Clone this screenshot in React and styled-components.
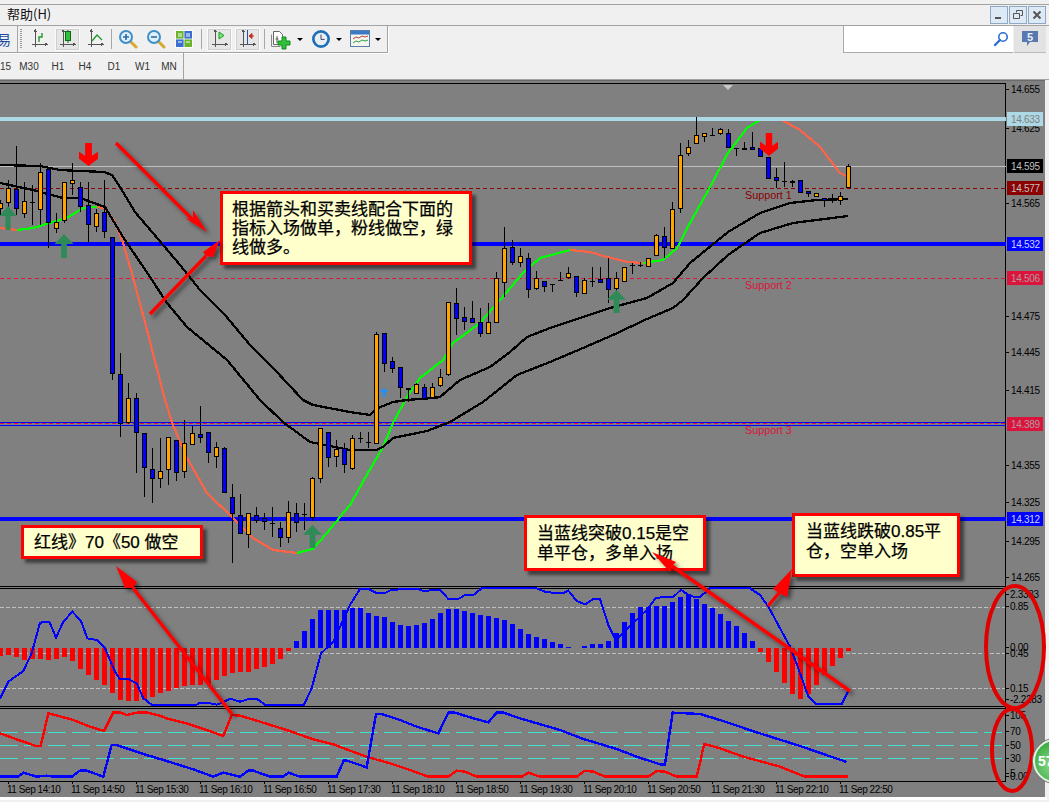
import React from 'react';
import styled, { createGlobalStyle } from 'styled-components';

const Global = createGlobalStyle`
  html, body { margin: 0; padding: 0; background: #f0f0f0; overflow: hidden; }
  #root { width: 1049px; height: 802px; }
`;

const UI_FONT = `"Liberation Sans", "Noto Sans CJK SC", sans-serif`;

const Shell = styled.div`
  position: relative;
  width: 1049px;
  height: 802px;
  overflow: hidden;
  background: #f0f0f0;
  display: flex;
  flex-direction: column;
  font-family: ${UI_FONT};
`;
const MenuBar = styled.div`
  margin-top: 4px;
  height: 20px;
  border-top: 1px solid #a3a3a3;
  border-bottom: 1px solid #a3a3a3;
  display: flex;
  align-items: center;
  padding: 0 3px 0 7px;
`;
const MenuLabel = styled.span`
  font-size: 13px;
  line-height: 14px;
  margin-top: -3px;
  color: #111;
  font-family: "Noto Sans CJK SC", sans-serif;
`;
const WindowControls = styled.div`
  margin-left: auto;
  display: flex;
  gap: 1px;
`;
const WindowButton = styled.button`
  width: 18px;
  height: 18px;
  padding: 0;
  border: 1px solid #8fa8c4;
  background: #dde9f5;
  display: flex;
  align-items: center;
  justify-content: center;
`;
const ToolRow = styled.div`
  height: 27px;
  display: flex;
  align-items: stretch;
`;
const ToolStrip = styled.div`
  width: 388px;
  box-sizing: border-box;
  border-right: 1px solid #a3a3a3;
  border-bottom: 1px solid #a3a3a3;
  box-shadow: 1px 1px 0 #fff;
  display: flex;
  align-items: center;
  overflow: hidden;
`;
const ClippedGlyph = styled.span`
  width: 24px;
  margin-left: -3px;
  font-size: 14px;
  color: #1c4aa0;
  font-family: "Noto Sans CJK SC", sans-serif;
  white-space: nowrap;
  box-sizing: border-box;
`;
const Separator = styled.div`
  width: 1px;
  height: ${p => p.$h || 22}px;
  background: #a8a8a8;
  margin: 0 ${p => p.$m ?? 2}px;
  flex: none;
`;
const Grip = styled.div`
  width: 2px;
  height: 20px;
  margin: 0 3px 0 2px;
  background: repeating-linear-gradient(to bottom, #9a9a9a 0 1px, transparent 1px 2px);
  flex: none;
`;
const ToolButton = styled.div`
  width: ${p => p.$w || 28}px;
  height: 23px;
  flex: none;
  display: flex;
  align-items: center;
  justify-content: center;
  box-sizing: border-box;
  ${p => p.$pressed && `
    width: 25px;
    margin: 0 1.5px;
    background: #e6e6e6;
    border: 1px solid #fafafa;
    outline: 1px solid #cfcfcf;
    outline-offset: -2px;
  `}
`;
const Caret = styled.span`
  width: 0;
  height: 0;
  flex: none;
  border-left: 3px solid transparent;
  border-right: 3px solid transparent;
  border-top: 3px solid #000;
  margin: 0 ${p => p.$r ?? 6}px 0 3px;
`;
const SearchBox = styled.div`
  margin-left: auto;
  width: 170px;
  box-sizing: border-box;
  background: #fff;
  border-left: 1px solid #aaa;
  border-bottom: 1px solid #aaa;
  display: flex;
  align-items: center;
  justify-content: flex-end;
  padding-right: 4px;
`;
const NoticeButton = styled.div`
  width: 32px;
  margin: 0 3px 0 1px;
  background: #e3e3e3;
  border-bottom: 1px solid #bbb;
  display: flex;
  align-items: center;
  justify-content: center;
`;
const TimeframeRow = styled.div`
  height: 26px;
  border-bottom: 1px solid #a3a3a3;
  display: flex;
`;
const TimeframeStrip = styled.div`
  width: 184px;
  box-sizing: border-box;
  border-right: 1px solid #a3a3a3;
  display: grid;
  grid-template-columns: 11px 36px 22px 32px 26px 31px 22px;
  align-items: center;
  justify-items: center;
  font-size: 10px;
  color: #333;
`;
const ChartWindow = styled.div`
  width: 1045px;
  height: 717px;
  background: #808080;
  border-top: 1px solid #6a6a6a;
  box-sizing: border-box;
  display: flex;
  flex-direction: column;
  flex: none;
`;
const PaneSvg = styled.svg`
  display: block;
  flex: none;
`;
const TimeAxis = styled.div`
  height: 17px;
  padding-left: 7px;
  display: grid;
  grid-template-columns: repeat(14, 64px);
  align-items: center;
`;
const TimeLabel = styled.span`
  position: relative;
  font-size: 10px;
  letter-spacing: -0.45px;
  color: #000;
  white-space: nowrap;
  &::before {
    content: '';
    position: absolute;
    left: 1px;
    top: -3px;
    width: 1px;
    height: 3px;
    background: #000;
  }
`;
const BottomEdge = styled.div`
  height: 3px;
  background: #fff;
  width: 1047px;
`;
const AxisText = styled.text`
  font-family: "Liberation Sans", sans-serif;
  font-size: 10px;
  letter-spacing: -0.3px;
  fill: ${p => p.$fill || '#000'};
`;
const ChartNote = styled.text`
  font-family: "Liberation Sans", sans-serif;
  font-size: 10.8px;
  fill: ${p => p.$fill};
`;
const Callout = styled.div`
  position: absolute;
  left: ${p => p.$x}px;
  top: ${p => p.$y}px;
  width: ${p => p.$w}px;
  height: ${p => p.$h}px;
  box-sizing: border-box;
  background: #ffffcc;
  border: 3px solid #f00;
  box-shadow: 4px 4px 3px rgba(0, 0, 0, 0.5);
  padding: ${p => p.$pad};
  font-family: "Liberation Sans", "Noto Sans CJK SC", sans-serif;
  font-size: 17px;
  line-height: ${p => p.$lh || 19}px;
  color: #000;
  -webkit-text-stroke: 0.25px #000;
  white-space: pre;
`;
const Overlay = styled.svg`
  position: absolute;
  left: 0;
  top: 0;
  pointer-events: none;
`;
const Badge = styled.div`
  position: absolute;
  left: 1033px;
  top: 739px;
  width: 44px;
  height: 44px;
  box-sizing: border-box;
  border-radius: 50%;
  border: 2px solid #e6f0e4;
  box-shadow: 0 0 0 1px #707870;
  background: radial-gradient(circle at 45% 60%, #8fdc8f, #34a83c 75%);
  color: #fff;
  font-size: 14px;
  font-weight: 700;
  padding: 12px 0 0 3px;
`;

/* ---------- data ---------- */
const candles = [
  [0,200,215,203,208,'o'],[8,180,215,188,202,'o'],[16,146,215,189,208,'b'],[24,182,218,201,213,'o'],[32,185,225,202,203,'d'],
  [40,163,225,172,209,'o'],[48,167,248,169,222,'b'],[56,213,233,222,228,'o'],[64,182,223,182,220,'o'],[72,163,195,180,183,'o'],
  [80,182,212,187,206,'b'],[88,182,243,205,224,'b'],[96,209,232,213,226,'o'],[104,180,238,212,231,'b'],[112,237,380,237,373,'b'],
  [120,353,437,374,423,'b'],[128,383,424,398,422,'o'],[136,393,473,398,432,'b'],[144,433,497,433,467,'b'],[152,448,503,469,478,'b'],
  [160,438,488,471,478,'o'],[168,437,485,437,469,'o'],[176,440,481,440,472,'b'],[184,420,478,443,471,'o'],[192,426,444,433,444,'o'],
  [200,406,443,434,437,'b'],[208,432,463,432,452,'b'],[216,442,468,447,456,'o'],[224,447,492,448,492,'b'],[232,484,563,497,513,'b'],
  [240,494,534,515,533,'b'],[248,513,548,513,534,'o'],[256,507,523,515,520,'b'],[264,513,530,518,521,'b'],[272,507,537,523,523,'d'],
  [280,522,547,528,537,'b'],[288,501,543,512,537,'o'],[296,503,532,513,522,'b'],[304,503,530,514,514,'d'],[312,477,521,478,517,'o'],
  [320,428,483,428,478,'o'],[328,432,467,432,457,'b'],[336,440,467,449,456,'o'],[344,443,473,448,464,'b'],[352,435,470,438,468,'o'],
  [360,432,443,438,438,'d'],[368,432,448,442,442,'d'],[376,332,444,334,443,'o'],[384,333,372,333,363,'b'],[392,357,373,361,368,'b'],
  [400,367,398,367,387,'b'],[408,388,402,388,389,'b'],[416,383,394,384,393,'o'],[424,384,398,387,398,'b'],[432,383,397,387,397,'o'],
  [440,369,387,377,385,'o'],[448,302,376,302,374,'o'],[456,288,335,303,318,'b'],[464,307,330,317,321,'b'],[472,301,323,318,322,'b'],
  [480,308,337,322,333,'b'],[488,303,333,322,333,'o'],[496,272,322,278,322,'o'],[504,227,297,248,282,'o'],[512,240,265,247,262,'b'],
  [520,248,267,256,262,'o'],[528,253,298,258,289,'b'],[536,271,290,278,288,'o'],[544,281,292,281,286,'b'],[552,284,292,284,284,'d'],
  [560,272,280,280,280,'d'],[568,267,279,273,277,'o'],[576,276,297,276,292,'b'],[584,278,293,280,293,'o'],[592,267,287,281,281,'d'],
  [600,267,282,279,282,'b'],[608,258,303,278,289,'b'],[616,272,292,278,288,'o'],[624,267,281,267,281,'o'],[632,263,274,265,265,'d'],
  [640,262,267,265,265,'d'],[648,258,266,258,266,'o'],[656,234,255,235,255,'o'],[664,227,258,236,247,'b'],[672,202,248,209,248,'o'],
  [680,143,213,155,208,'o'],[688,140,156,147,153,'o'],[696,117,143,135,143,'o'],[704,133,142,133,136,'o'],[712,128,135,135,135,'d'],
  [720,128,135,129,133,'o'],[728,129,147,133,147,'b'],[736,148,156,148,148,'d'],[744,142,149,148,149,'o'],[752,132,149,147,149,'b'],
  [760,142,156,148,156,'b'],[768,157,178,157,178,'b'],[776,168,188,177,180,'b'],[784,162,187,181,181,'d'],[792,180,187,181,182,'b'],
  [800,180,192,180,192,'b'],[808,191,197,191,193,'b'],[816,193,197,193,196,'o'],[824,198,207,198,200,'b'],[832,194,203,198,198,'d'],
  [840,192,205,196,200,'o'],[848,164,187,166,187,'o'],
];
const upperMA = [[0,165],[40,166],[60,170],[80,171],[104,172],[112,175],[120,187],[135,212],[158,239],[180,265],[200,290],[225,315],[250,345],[275,370],[303,400],[313,405],[350,412],[370,415],[378,408],[393,402],[407,400],[433,398],[440,397],[460,380],[490,367],[510,352],[527,337],[550,328],[577,319],[610,308],[647,298],[673,283],[690,263],[728,232],[760,213],[790,203],[817,200],[848,199]];
const lowerMA = [[0,183],[33,190],[63,198],[80,198],[105,207],[123,237],[150,277],[167,303],[187,327],[227,360],[260,400],[283,422],[310,442],[350,450],[376,450],[383,447],[393,438],[427,431],[450,422],[483,402],[517,375],[550,362],[583,348],[613,335],[647,319],[673,308],[683,300],[703,278],[728,255],[760,233],[793,223],[848,216]];
const signalSegments = [
  ['#ff6347',[[0,228],[17,230]]],
  ['#00ff00',[[17,230],[33,228],[50,223],[67,218],[83,208],[97,207]]],
  ['#ff6347',[[97,207],[105,208],[115,222],[123,243],[133,277],[147,330],[165,400],[173,425],[187,458],[207,493],[233,518],[253,538],[273,550],[297,553]]],
  ['#00ff00',[[297,553],[313,549],[327,533],[340,517],[350,505],[365,478],[383,447],[393,423],[407,397],[420,378],[443,360],[453,343],[480,323],[500,300],[523,273],[540,258],[570,250]]],
  ['#ff6347',[[570,250],[590,252],[607,257],[627,262],[643,263]]],
  ['#00ff00',[[643,263],[663,260],[677,248],[690,223],[710,187],[728,153],[747,128],[760,120]]],
  ['#ff6347',[[782,120],[800,130],[820,147],[840,173],[846,176]]],
];
const hLines = [
  { y: 166, color: '#c0c0c0', w: 1 },
  { y: 188, color: '#8b0000', w: 1, dash: '4 3' },
  { y: 244, color: '#0000ff', w: 4 },
  { y: 278, color: '#dc143c', w: 1, dash: '4 3' },
  { y: 422, color: '#0000ff', w: 1 },
  { y: 425, color: '#0000ff', w: 1 },
  { y: 423.5, color: '#dc143c', w: 1, dash: '4 3' },
  { y: 519, color: '#0000ff', w: 4 },
];
const priceLabels = [
  [14.655, 89],[14.625, 128],[14.565, 203],[14.475, 316],[14.445, 352],[14.415, 390],[14.355, 465],[14.325, 502],[14.295, 541],[14.265, 577],
];
const priceTags = [
  { v: '14.633', y: 119, bg: '#add8e6', fg: '#808080' },
  { v: '14.595', y: 166, bg: '#000', fg: '#c0c0c0' },
  { v: '14.577', y: 188, bg: '#8b0000', fg: '#c0c0c0' },
  { v: '14.532', y: 244, bg: '#0000ff', fg: '#c8d4ff' },
  { v: '14.506', y: 278, bg: '#dc143c', fg: '#b09aa0' },
  { v: '14.389', y: 424, bg: '#dc143c', fg: '#b09aa0' },
  { v: '14.312', y: 519, bg: '#0000ff', fg: '#c8d4ff' },
];
const histA = [213,210,215,225,222,222,224,222,217,228,251,270,285,300,323,345,347,347,345,335,323,317,308,303,300,300,298,285,272,265,262,260,252,245,237,222,197,168,138,102,75,75,75,75,68,68,83,93,96,110,120,123,120,114,102,84,72,72,78,84,90,92,98,105,117,132,147,156,162,171,177,187,189,184,177,176,168,145,111,84,65,65,64,64,51,36,28,41].map(Y => 585 + Y / 3);
const histB = [312,323,342,363,378,398,422,455,485,515,548,583,598,583,555,525,497,473,453].map(Y => 500 + Y / 3);
const hist = [...histA, ...histB];
const ZERO = 648;

const z7 = a => a.map(([X, Y]) => [X / 3, 585 + Y / 3]);
const z8 = a => a.map(([X, Y]) => [350 + X / 3, 585 + Y / 3]);
const z9 = a => a.map(([X, Y]) => [700 + X / 3, 500 + Y / 3]);

const macdLine = [
  ...z7([[0,340],[25,290],[70,258],[95,205],[120,113],[148,110],[168,158],[190,110],[217,80],[243,108],[262,160],[290,165],[315,190],[345,260],[360,282],[385,282],[410,295],[430,340],[455,359],[590,359],[600,353],[620,353],[650,359],[665,354],[690,341],[720,350],[750,341],[770,341],[795,359],[912,359],[935,310],[963,205],[1000,170],[1050,60]]),
  ...z8([[30,12],[55,12],[80,24],[105,24],[125,14],[205,12],[220,18],[270,14],[295,42],[325,42],[345,30],[370,30],[395,10],[560,10],[590,22],[640,24],[655,17],[680,48],[705,58],[730,42],[750,42],[775,120],[795,160],[805,158],[890,75],[918,38],[970,36],[993,14],[1020,34],[1050,36]]),
  ...z9([[30,265],[150,265],[180,285],[205,320],[270,440],[295,505],[325,590],[350,613],[425,613],[445,572]]),
];
const rsiRed = [
  ...z7([[0,445],[50,463],[108,483],[122,483],[145,385],[165,390],[220,405],[270,425],[312,438],[340,382],[360,382],[380,390],[415,382],[440,382],[480,392],[500,400],[560,415],[620,435],[670,453],[695,390],[720,392],[780,410],[860,435],[940,463],[1000,478],[1050,497]]),
  ...z8([[50,515],[120,535],[180,555],[235,575],[295,575],[320,557],[345,560],[380,575],[515,575],[535,563],[570,575],[680,575],[705,557],[730,560],[765,575],[895,575],[920,558],[945,560],[980,575],[1040,575]]),
  ...z9([[0,790],[12,733],[25,735],[60,745],[130,770],[240,800],[315,830],[445,830]]),
];
const rsiBlue = [
  ...z7([[0,575],[55,575],[70,563],[110,575],[140,572],[160,575],[215,575],[240,557],[260,557],[310,575],[335,480],[350,480],[440,510],[490,525],[580,553],[640,575],[670,563],[720,575],[745,557],[760,557],[810,575],[850,575],[865,563],[900,575],[1010,575],[1032,525],[1050,530]]),
  ...z8([[50,547],[78,387],[95,387],[150,405],[200,425],[265,445],[295,383],[315,383],[370,400],[415,412],[440,383],[460,383],[510,400],[630,435],[700,462],[800,492],[860,515],[930,538],[945,538],[968,383],[1050,387]]),
  ...z9([[60,660],[170,697],[300,738],[440,786]]),
];
const pts = a => a.map(p => p.join(',')).join(' ');
const times = ['14:10','14:50','15:30','16:10','16:50','17:30','18:10','18:50','19:30','20:10','20:50','21:30','22:10','22:50'];

/* ---------- chart pieces ---------- */
const Candle = ({ c: [x, wt, wb, bt, bb, k] }) => (
  <g shapeRendering="crispEdges">
    <line x1={x + 0.5} x2={x + 0.5} y1={wt} y2={wb} stroke="#000" />
    {k === 'd'
      ? <line x1={x - 2} x2={x + 3} y1={bt + 0.5} y2={bt + 0.5} stroke="#000" />
      : <rect x={x - 1.5} y={bt + 0.5} width={4} height={Math.max(bb - bt, 1)} fill={k === 'o' ? '#ffa500' : '#0000ff'} stroke="#000" />}
  </g>
);
const UpArrow = ({ x, y, w, h, color }) => {
  const s = w * 0.3, sh = h * 0.42;
  return <polygon fill={color} points={`${x},${y} ${x + w / 2},${y + sh} ${x + s / 2},${y + sh} ${x + s / 2},${y + h} ${x - s / 2},${y + h} ${x - s / 2},${y + sh} ${x - w / 2},${y + sh}`} />;
};
const DownArrow = ({ x, y, w, h, color }) => {
  const s = w * 0.36, d = h * 0.55;
  return <polygon fill={color} points={`${x - s / 2},${y} ${x + s / 2},${y} ${x + s / 2},${y + d} ${x + w / 2},${y + d - 4} ${x + w / 2},${y + d + 3} ${x},${y + h} ${x - w / 2},${y + d + 3} ${x - w / 2},${y + d - 4} ${x - s / 2},${y + d}`} />;
};
const AxisFrame = ({ top, bottom }) => (
  <line x1="1005.5" x2="1005.5" y1={top} y2={bottom} stroke="#000" shapeRendering="crispEdges" />
);
const Tick = ({ y }) => <line x1="1006" x2="1009" y1={Math.round(y) + 0.5} y2={Math.round(y) + 0.5} stroke="#000" shapeRendering="crispEdges" />;

const MainPane = () => (
  <PaneSvg width="1045" height="506" viewBox="0 81 1045 506">
    <line x1="0" x2="1006" y1="83.5" y2="83.5" stroke="#000" shapeRendering="crispEdges" />
    <AxisFrame top={83} bottom={587} />
    {hLines.map((l, i) => (
      <line key={i} x1="0" x2="1006" y1={l.y} y2={l.y} stroke={l.color} strokeWidth={l.w} strokeDasharray={l.dash} shapeRendering="crispEdges" />
    ))}
    <polygon points="723,85 733,85 728,90" fill="#c8c8c8" />
    <ChartNote x="745" y="199" $fill="#8b0000">Support 1</ChartNote>
    <ChartNote x="745" y="289" $fill="#dc143c">Support 2</ChartNote>
    <ChartNote x="745" y="434" $fill="#dc143c">Support 3</ChartNote>
    {signalSegments.map(([c, s], i) => (
      <polyline key={i} points={pts(s)} fill="none" stroke={c} strokeWidth="2.2" shapeRendering="crispEdges" />
    ))}
    <polyline points={pts(upperMA)} fill="none" stroke="#000" strokeWidth="2.3" shapeRendering="crispEdges" />
    <polyline points={pts(lowerMA)} fill="none" stroke="#000" strokeWidth="2.3" shapeRendering="crispEdges" />
    <line x1="0" x2="1006" y1="119" y2="119" stroke="#add8e6" strokeWidth="4" shapeRendering="crispEdges" />
    {candles.map(c => <Candle key={c[0]} c={c} />)}
    <UpArrow x={8} y={206} w={17} h={24} color="#2e8b57" />
    <UpArrow x={64} y={234} w={19} h={24} color="#2e8b57" />
    <UpArrow x={312.5} y={525} w={19} h={23} color="#2e8b57" />
    <UpArrow x={616.5} y={290} w={19} h={23} color="#2e8b57" />
    <UpArrow x={384} y={388} w={9} h={9} color="#1e90ff" />
    <DownArrow x={88.5} y={143} w={19} h={23} color="#ff0000" />
    <DownArrow x={769} y={133} w={18} h={23} color="#ff0000" />
    {priceLabels.map(([v, y]) => (
      <g key={v}>
        <Tick y={y} />
        <AxisText x="1011" y={y + 3.5}>{v.toFixed(3)}</AxisText>
      </g>
    ))}
    {priceTags.map(t => (
      <g key={t.v}>
        <rect x="1007" y={t.y - 7} width="36" height="14" fill={t.bg} />
        <AxisText x="1011" y={t.y + 3.5} $fill={t.fg}>{t.v}</AxisText>
      </g>
    ))}
    <line x1="0" x2="1006" y1="586.5" y2="586.5" stroke="#000" shapeRendering="crispEdges" />
  </PaneSvg>
);

const OscillatorPane = () => (
  <PaneSvg width="1045" height="120" viewBox="0 587 1045 120">
    <line x1="0" x2="1006" y1="588.5" y2="588.5" stroke="#000" shapeRendering="crispEdges" />
    <AxisFrame top={587} bottom={707} />
    {[607, 653, 688].map(y => (
      <line key={y} x1="0" x2="1005" y1={y + 0.5} y2={y + 0.5} stroke="#c0c0c0" strokeDasharray="4 2" shapeRendering="crispEdges" />
    ))}
    {hist.map((y, i) => {
      const up = y < ZERO;
      const x = i * 8 - 2;
      return <rect key={i} x={x} y={up ? y : ZERO} width="5" height={Math.abs(y - ZERO)} fill={up ? '#0000ff' : '#ff0000'} shapeRendering="crispEdges" />;
    })}
    <polyline points={pts(macdLine)} fill="none" stroke="#0000ff" strokeWidth="2" shapeRendering="crispEdges" />
    {[['2.3383',594],['0.85',606],['0.00',647],['0.45',653],['0.15',688],['-2.2283',699]].map(([v, y]) => (
      <g key={v}>
        <Tick y={y} />
        <AxisText x="1010" y={y + 3.5}>{v}</AxisText>
      </g>
    ))}
    <line x1="0" x2="1006" y1="706.5" y2="706.5" stroke="#000" shapeRendering="crispEdges" />
  </PaneSvg>
);

const RsiPane = () => (
  <PaneSvg width="1045" height="75" viewBox="0 707 1045 75">
    <line x1="0" x2="1006" y1="708.5" y2="708.5" stroke="#000" shapeRendering="crispEdges" />
    <AxisFrame top={707} bottom={782} />
    {[732, 745, 758].map(y => (
      <line key={y} x1="0" x2="1005" y1={y + 0.5} y2={y + 0.5} stroke="#40e0d0" strokeDasharray="18 6" shapeRendering="crispEdges" />
    ))}
    <polyline points={pts(rsiRed)} fill="none" stroke="#ff0000" strokeWidth="2.4" shapeRendering="crispEdges" />
    <polyline points={pts(rsiBlue)} fill="none" stroke="#0000ff" strokeWidth="2.4" shapeRendering="crispEdges" />
    {[['105',715],['70',731],['50',745],['30',758],['5',773],['0.00',776]].map(([v, y]) => (
      <g key={v}>
        <Tick y={y} />
        <AxisText x="1010" y={y + 3.5}>{v}</AxisText>
      </g>
    ))}
    <line x1="0" x2="1006" y1="781.5" y2="781.5" stroke="#000" shapeRendering="crispEdges" />
  </PaneSvg>
);

/* ---------- annotations ---------- */
const RedArrow = ({ from, tip, w1, w2, neck }) => (
  <g>
    <line x1={from[0]} y1={from[1]} x2={neck[0]} y2={neck[1]} stroke="#f00" strokeWidth="3.4" />
    <polygon points={`${tip[0]},${tip[1]} ${w1[0]},${w1[1]} ${neck[0]},${neck[1]} ${w2[0]},${w2[1]}`} fill="#f00" />
  </g>
);
const Annotations = () => (
  <Overlay width="1049" height="802" viewBox="0 0 1049 802">
    <defs>
      <filter id="sh" x="-20%" y="-20%" width="150%" height="150%">
        <feDropShadow dx="3" dy="3" stdDeviation="2" floodColor="#000" floodOpacity="0.5" />
      </filter>
    </defs>
    <g filter="url(#sh)">
      <RedArrow from={[116, 143]} tip={[207, 232]} w1={[185, 218]} w2={[193, 210]} neck={[193, 220]} />
      <RedArrow from={[150, 314]} tip={[220, 240]} w1={[203, 252]} w2={[213, 257]} neck={[206, 256]} />
      <RedArrow from={[232, 714]} tip={[116, 566]} w1={[137, 582]} w2={[125, 588]} neck={[133, 588]} />
      <RedArrow from={[850, 691]} tip={[652, 552]} w1={[676, 562]} w2={[670, 572]} neck={[672, 566]} />
      <RedArrow from={[768, 606]} tip={[792, 569]} w1={[773, 589]} w2={[787, 597]} neck={[779, 593]} />
    </g>
    <ellipse cx="1015" cy="647" rx="29" ry="61" fill="none" stroke="#e00000" strokeWidth="4" />
    <ellipse cx="1012" cy="750" rx="20" ry="41" fill="none" stroke="#e00000" strokeWidth="4" />
  </Overlay>
);

/* ---------- toolbar icons ---------- */
const Axes = ({ children }) => (
  <svg width="22" height="22" viewBox="0 0 22 22">
    <g stroke="#555" strokeWidth="1" fill="none" shapeRendering="crispEdges">
      <path d="M7.5 2V19M4 16.5H19M6 4l1.5-2L9 4M17 15l2 1.5-2 1.5" />
    </g>
    {children}
  </svg>
);
const Magnifier = ({ plus }) => (
  <svg width="20" height="20" viewBox="0 0 20 20">
    <line x1="12" y1="12" x2="18" y2="18" stroke="#d9a830" strokeWidth="3" strokeLinecap="round" />
    <circle cx="8" cy="8" r="6" fill="#dff0fb" stroke="#3f8fc8" strokeWidth="2" />
    <path d={plus ? 'M5 8h6M8 5v6' : 'M5 8h6'} stroke="#2a6aa8" strokeWidth="1.6" />
  </svg>
);
const TileIcon = () => (
  <svg width="18" height="18" viewBox="0 0 18 18">
    <rect x="1" y="1" width="8" height="8" fill="#6ab42e" />
    <rect x="9" y="1" width="8" height="8" fill="#3a6fd0" />
    <rect x="1" y="9" width="8" height="8" fill="#3a6fd0" />
    <rect x="9" y="9" width="8" height="8" fill="#6ab42e" />
    <path d="M3 4h4M11 4h4M3 12h4M11 12h4M3 6h4M11 6h4" stroke="#fff" />
    <path d="M0.5 0.5h17v17h-17zM0.5 9h17M9 0.5v17" stroke="#fff" fill="none" strokeWidth="0.8" />
  </svg>
);
const NewChartIcon = () => (
  <svg width="22" height="22" viewBox="0 0 22 22">
    <path d="M3.5 3.5h6l3 3v10h-9z" fill="#fff" stroke="#666" />
    <path d="M1.5 6.5v12h9" fill="none" stroke="#888" />
    <path d="M7 8v7M5.5 11h3" stroke="#555" />
    <path d="M12 9h4v4h4v4h-4v4h-4v-4H8v-4h4z" fill="#2fc13a" stroke="#158a20" />
  </svg>
);
const ClockIcon = () => (
  <svg width="18" height="18" viewBox="0 0 20 20">
    <circle cx="10" cy="10" r="8.5" fill="#e8eef2" stroke="#1f6fb8" strokeWidth="3" />
    <path d="M10 5v5.5H14" stroke="#335" fill="none" />
  </svg>
);
const TemplateIcon = () => (
  <svg width="20" height="18" viewBox="0 0 20 18">
    <rect x="0.5" y="0.5" width="19" height="16" fill="#f6f6f0" stroke="#5a7da8" />
    <rect x="1" y="1" width="18" height="3.5" fill="#3a78c8" />
    <path d="M3 9l3-2 3 1 3-2 3 1 3-1" stroke="#c04030" fill="none" />
    <path d="M3 13l3-2 3 1 3-2 3 1 3-1" stroke="#30a040" fill="none" />
  </svg>
);

export default function App() {
  return (
    <Shell>
      <Global />
      <MenuBar>
        <MenuLabel>帮助(H)</MenuLabel>
        <WindowControls>
          <WindowButton aria-label="min"><svg width="10" height="10"><rect x="1" y="7" width="6" height="2" fill="#555" /></svg></WindowButton>
          <WindowButton aria-label="restore"><svg width="10" height="10" fill="none" stroke="#555"><path d="M3.5 2.5V.5h6v5h-2M.5 3.5h6v5h-6z" /></svg></WindowButton>
          <WindowButton aria-label="close"><svg width="10" height="10" stroke="#555" strokeWidth="2"><path d="M1.5 1.5l7 7M8.5 1.5l-7 7" /></svg></WindowButton>
        </WindowControls>
      </MenuBar>
      <ToolRow>
        <ToolStrip>
          <ClippedGlyph>易</ClippedGlyph>
          <Separator $m={0} $h={26} />
          <Grip />
          <ToolButton>
            <Axes><path d="M11 14V9h3V5" stroke="#1e9a2a" strokeWidth="1.4" fill="none" /></Axes>
          </ToolButton>
          <ToolButton $pressed>
            <Axes><rect x="9.5" y="3.5" width="5" height="9" fill="#2fc13a" stroke="#0a6a14" /><path d="M12 1v2.5M12 12.5V15" stroke="#0a6a14" /></Axes>
          </ToolButton>
          <ToolButton>
            <Axes><path d="M8 13l5-6 5 5" stroke="#1e9a2a" strokeWidth="1.3" fill="none" /></Axes>
          </ToolButton>
          <Separator $h={20} />
          <ToolButton><Magnifier plus /></ToolButton>
          <ToolButton><Magnifier /></ToolButton>
          <ToolButton><TileIcon /></ToolButton>
          <Separator $h={20} $m={3} />
          <ToolButton $pressed>
            <Axes><path d="M11 4v7l5-3.5z" fill="#7fe07f" stroke="#16a020" /></Axes>
          </ToolButton>
          <ToolButton $pressed>
            <Axes><path d="M11.5 2v14" stroke="#2050b0" /><path d="M18 8l-5 0M13 8l3-2.5v5z" fill="#c03020" stroke="#c03020" /></Axes>
          </ToolButton>
          <Separator $h={20} $m={3} />
          <ToolButton $w={26}><NewChartIcon /></ToolButton>
          <Caret $r={6} />
          <ToolButton $w={24}><ClockIcon /></ToolButton>
          <Caret $r={6} />
          <ToolButton $w={24}><TemplateIcon /></ToolButton>
          <Caret />
        </ToolStrip>
        <SearchBox>
          <svg width="16" height="16" viewBox="0 0 16 16" fill="none" stroke="#2a6fd0">
            <circle cx="10" cy="6" r="4.2" strokeWidth="1.6" />
            <line x1="7" y1="9" x2="2" y2="14" strokeWidth="2.4" strokeLinecap="round" />
          </svg>
        </SearchBox>
        <NoticeButton>
          <svg width="18" height="18" viewBox="0 0 18 18">
            <path d="M1 1h16v11H9l-3 4v-4H1z" fill="#5a78b0" />
            <text x="9" y="10.5" textAnchor="middle" fontFamily="Liberation Sans, sans-serif" fontSize="11" fontWeight="700" fill="#e8eef8">5</text>
          </svg>
        </NoticeButton>
      </ToolRow>
      <TimeframeRow>
        <TimeframeStrip>
          {['15', 'M30', 'H1', 'H4', 'D1', 'W1', 'MN'].map(t => <span key={t}>{t}</span>)}
        </TimeframeStrip>
      </TimeframeRow>
      <ChartWindow>
        <MainPane />
        <OscillatorPane />
        <RsiPane />
        <TimeAxis>
          {times.map(t => <TimeLabel key={t}>11 Sep {t}</TimeLabel>)}
        </TimeAxis>
      </ChartWindow>
      <BottomEdge />

      <Callout $x={220} $y={191} $w={252} $h={74} $pad="6px 6px 0 9px">{'根据箭头和买卖线配合下面的\n指标入场做单，粉线做空，绿\n线做多。'}</Callout>
      <Callout $x={21} $y={525} $w={182} $h={34} $pad="5px 0 0 10px">{'红线》70《50 做空'}</Callout>
      <Callout $x={524} $y={515} $w={182} $h={56} $pad="6px 0 0 10px" $lh={20}>{'当蓝线突破0.15是空\n单平仓，多单入场'}</Callout>
      <Callout $x={792} $y={513} $w={168} $h={64} $pad="6px 0 0 11px" $lh={20}>{'当蓝线跌破0.85平\n仓，空单入场'}</Callout>
      <Annotations />
      <Badge>57</Badge>
    </Shell>
  );
}
